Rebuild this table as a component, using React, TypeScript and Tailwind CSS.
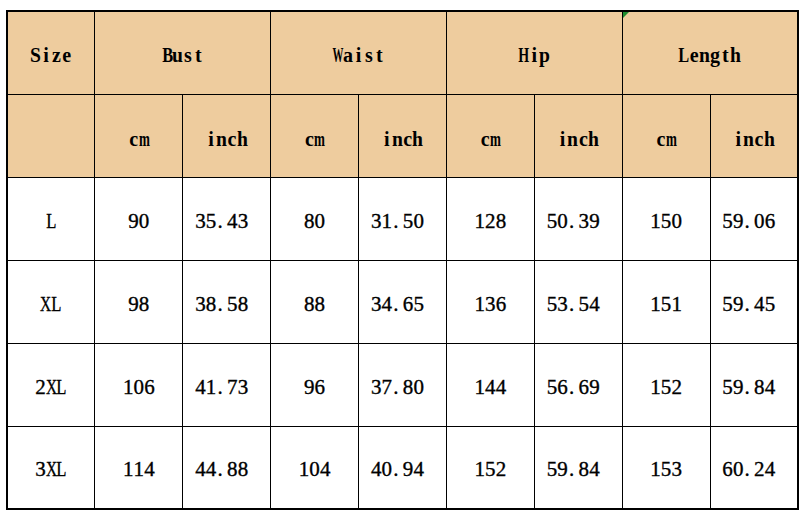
const GROUPS = ['Bust', 'Waist', 'Hip', 'Length']

const ROWS: [string, string[]][] = [
  ['L', ['90', '35.43', '80', '31.50', '128', '50.39', '150', '59.06']],
  ['XL', ['98', '38.58', '88', '34.65', '136', '53.54', '151', '59.45']],
  ['2XL', ['106', '41.73', '96', '37.80', '144', '56.69', '152', '59.84']],
  ['3XL', ['114', '44.88', '104', '40.94', '152', '59.84', '153', '60.24']],
]

// Times advance widths (em), used to squeeze wide glyphs into a fixed cell
const ADV: Record<string, number> = {
  S: 0.556, B: 0.667, W: 1.0, H: 0.778, L: 0.667, X: 0.722,
  i: 0.278, z: 0.444, e: 0.444, u: 0.556, s: 0.389, t: 0.333, a: 0.5,
  p: 0.556, n: 0.556, g: 0.5, h: 0.556, c: 0.444, m: 0.833,
}

// fake monospace: every glyph gets the same cell width
function Mono({ text, cell, size }: { text: string; cell: number; size: number }) {
  return (
    <span className="inline-flex">
      {text.split('').map((ch, i) => {
        const w = (ADV[ch] ?? 0.5) * size
        const scale = w > cell ? (cell + 0.5) / w : 1
        return (
          <span
            key={i}
            className={`flex ${ch === '.' ? 'justify-start pl-[1px]' : 'justify-center'}`}
            style={{ width: cell }}
          >
            <span className="inline-block shrink-0 whitespace-nowrap" style={{ transform: `scaleX(${scale})` }}>
              {ch}
            </span>
          </span>
        )
      })}
    </span>
  )
}

const head = "border border-black bg-[#eecc9e] text-center font-bold text-black text-[20px] leading-none [font-family:'Liberation_Serif',serif]"
const cell = "border border-black bg-white text-center text-black text-[21px] leading-none pt-[5px] [-webkit-text-stroke:0.35px_black] [font-family:'Liberation_Serif',serif]"

export default function App() {
  return (
    <div className="min-h-[519px] w-[806px] bg-white pl-[6px] pt-[10px]">
      <table className="w-[793px] table-fixed border-collapse border-2 border-black">
        <tbody>
          <tr className="h-[83px]">
            <td className={`${head} pt-[4px]`}>
              <Mono text="Size" cell={10.4} size={20} />
            </td>
            {GROUPS.map((g) => (
              <td key={g} colSpan={2} className={`${head} relative pt-[4px]`}>
                {g === 'Length' && (
                  <span className="absolute left-0 top-0 h-0 w-0 border-r-[6px] border-t-[6px] border-r-transparent border-t-[#1e8c2e]" />
                )}
                <Mono text={g} cell={10.4} size={20} />
              </td>
            ))}
          </tr>
          <tr className="h-[83px]">
            <td className={head}></td>
            {GROUPS.map((g) => (
              <>
                <td key={g + 'cm'} className={`${head} pt-[6px]`}>
                  <Mono text="cm" cell={10.4} size={20} />
                </td>
                <td key={g + 'in'} className={`${head} pt-[6px]`}>
                  <Mono text="inch" cell={10.4} size={20} />
                </td>
              </>
            ))}
          </tr>
          {ROWS.map(([size, vals]) => (
            <tr key={size} className="h-[83px]">
              <td className={cell}>
                <Mono text={size} cell={10.6} size={21} />
              </td>
              {vals.map((v, i) => (
                <td key={i} className={`${cell} ${v.includes('.') ? 'pr-[10px]' : ''}`}>
                  <Mono text={v} cell={10.6} size={21} />
                </td>
              ))}
            </tr>
          ))}
        </tbody>
      </table>
    </div>
  )
}
